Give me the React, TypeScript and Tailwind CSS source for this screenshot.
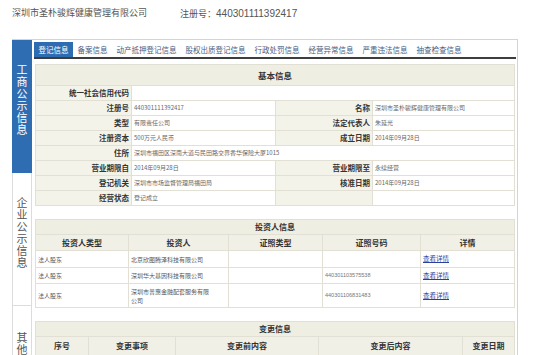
import React from "react"

const tabs = [
  "登记信息",
  "备案信息",
  "动产抵押登记信息",
  "股权出质登记信息",
  "行政处罚信息",
  "经营异常信息",
  "严重违法信息",
  "抽查检查信息",
]

type BasicRow = { label: string; value: string; label2?: string; value2?: string; wide?: boolean }

const basicRows: BasicRow[] = [
  { label: "统一社会信用代码", value: "", wide: true },
  { label: "注册号", value: "440301111392417", label2: "名称", value2: "深圳市圣朴骏辉健康管理有限公司" },
  { label: "类型", value: "有限责任公司", label2: "法定代表人", value2: "朱延光" },
  { label: "注册资本", value: "500万元人民币", label2: "成立日期", value2: "2014年09月28日" },
  { label: "住所", value: "深圳市福田区深南大道与民田路交界香华保险大厦1015", wide: true },
  { label: "营业期限自", value: "2014年09月28日", label2: "营业期限至", value2: "永续经营" },
  { label: "登记机关", value: "深圳市市场监督管理局福田局", label2: "核准日期", value2: "2014年09月28日" },
  { label: "经营状态", value: "登记成立", label2: "", value2: "" },
]

const investors = [
  { type: "法人股东", name: "北京欣图腾泽科技有限公司", no: "", h: "h-[16px]" },
  { type: "法人股东", name: "深圳华大基因科技有限公司", no: "440301103575538", h: "h-[15px]" },
  { type: "法人股东", name: "深圳市普惠金融配套服务有限公司", no: "440301106831483", h: "h-[23px]" },
]

function VerticalText(props: { text: string; className: string }) {
  // one text run laid out top-to-bottom
  return (
    <div className="flex justify-center">
      <span className={`text-[11px] leading-[20px] tracking-[1px] [writing-mode:vertical-rl] ${props.className}`}>
        {props.text}
      </span>
    </div>
  )
}

function Sidebar() {
  return (
    <div className="flex w-[20px] shrink-0 flex-col">
      <div className="h-[133px] bg-[#2f6db3] pt-[24px]">
        <VerticalText text="工商公示信息" className="text-white" />
      </div>
      <div className="h-[132px] border-x border-[#dcdcdc] pt-[24px]">
        <VerticalText text="企业公示信息" className="text-[#555]" />
      </div>
      <div className="h-[50px] overflow-hidden border-x border-t border-[#dcdcdc] pt-[26px]">
        <VerticalText text="其他信息" className="text-[#555]" />
      </div>
    </div>
  )
}

const labelCls = "bg-[#f4f3ea] pr-[2px] text-right text-[7.5px] font-bold leading-[14px] text-[#333] whitespace-nowrap"
const valueCls = "bg-white pl-[2px] text-[6px] leading-[14px] text-[#666] whitespace-nowrap overflow-hidden"
const headCls = "bg-[#f1f0e6] text-center text-[8px] font-bold text-[#333] flex items-center justify-center"

export default function App() {
  return (
    <div className="h-[355px] w-[550px] overflow-hidden bg-white font-['Noto_Sans_CJK_SC',sans-serif]">
      <div className="flex h-[39px] items-start pl-[12px] pt-[6px] text-[9px] text-[#555]">
        <span>深圳市圣朴骏辉健康管理有限公司</span>
        <span className="ml-[33px]">
          注册号：<span className="font-['Liberation_Sans'] text-[10px]">440301111392417</span>
        </span>
      </div>

      <div className="ml-[12px] flex w-[506px] border-r border-t border-[#d4d4d4]">
        <Sidebar />

        <div className="flex-1 pl-[2px] pr-[1px]">
          {/* tabs */}
          <div className="mt-[2px] flex h-[17px] border-b-2 border-[#3d3d3d]">
            {tabs.map((t, i) => (
              <div
                key={t}
                className={
                  i === 0
                    ? "bg-[#2e6cb2] px-[4.5px] text-[7.5px] leading-[15px] text-white"
                    : "px-[4.5px] text-[7.5px] leading-[15px] text-[#4b5d80]"
                }
              >
                {t}
              </div>
            ))}
          </div>

          {/* basic info */}
          <div className="mx-[1px] mt-[5px] grid grid-cols-[95px_143px_96px_141px] gap-px bg-[#e2dfd4] p-px">
            <div className="col-span-4 flex h-[20px] items-center justify-center bg-[#efeee3] text-[8.5px] font-bold text-[#333]">
              基本信息
            </div>
            {basicRows.map((r) => (
              <React.Fragment key={r.label}>
                <div className={`h-[14px] ${labelCls}`}>{r.label}</div>
                {r.wide ? (
                  <div className={`col-span-3 ${valueCls}`}>{r.value}</div>
                ) : (
                  <>
                    <div className={valueCls}>{r.value}</div>
                    <div className={labelCls}>{r.label2}</div>
                    <div className={valueCls}>{r.value2}</div>
                  </>
                )}
              </React.Fragment>
            ))}
          </div>

          {/* investors */}
          <div className="mx-[1px] mt-[13px] grid grid-cols-[92px_99px_93px_97px_93px] gap-px bg-[#e2dfd4] p-px">
            <div className="col-span-5 flex h-[14px] items-center justify-center bg-[#efeee3] text-[8px] font-bold text-[#333]">
              投资人信息
            </div>
            <div className={`h-[15px] ${headCls}`}>投资人类型</div>
            <div className={headCls}>投资人</div>
            <div className={headCls}>证照类型</div>
            <div className={headCls}>证照号码</div>
            <div className={headCls}>详情</div>
            {investors.map((v) => (
              <React.Fragment key={v.name}>
                <div className={`${v.h} flex items-center bg-white pl-[2px] text-[6px] text-[#555]`}>{v.type}</div>
                <div className="flex items-center bg-white pl-[2px] pr-[14px] text-[6px] leading-[9px] text-[#555]">
                  {v.name}
                </div>
                <div className="bg-white" />
                <div className="flex items-center bg-white pl-[2px] font-['Liberation_Sans'] text-[5.5px] text-[#777]">
                  {v.no}
                </div>
                <div className="flex items-center bg-white pl-[2px]">
                  <span className="text-[6.5px] text-[#2b3f9e] underline">查看详情</span>
                </div>
              </React.Fragment>
            ))}
          </div>

          {/* changes */}
          <div className="mx-[1px] mt-[13px] grid grid-cols-[52px_86px_142px_143px_51px] gap-px bg-[#e2dfd4] p-px">
            <div className="col-span-5 flex h-[14px] items-center justify-center bg-[#efeee3] text-[8px] font-bold text-[#333]">
              变更信息
            </div>
            <div className={`h-[18px] ${headCls}`}>序号</div>
            <div className={headCls}>变更事项</div>
            <div className={headCls}>变更前内容</div>
            <div className={headCls}>变更后内容</div>
            <div className={headCls}>变更日期</div>
          </div>
        </div>
      </div>
    </div>
  )
}
